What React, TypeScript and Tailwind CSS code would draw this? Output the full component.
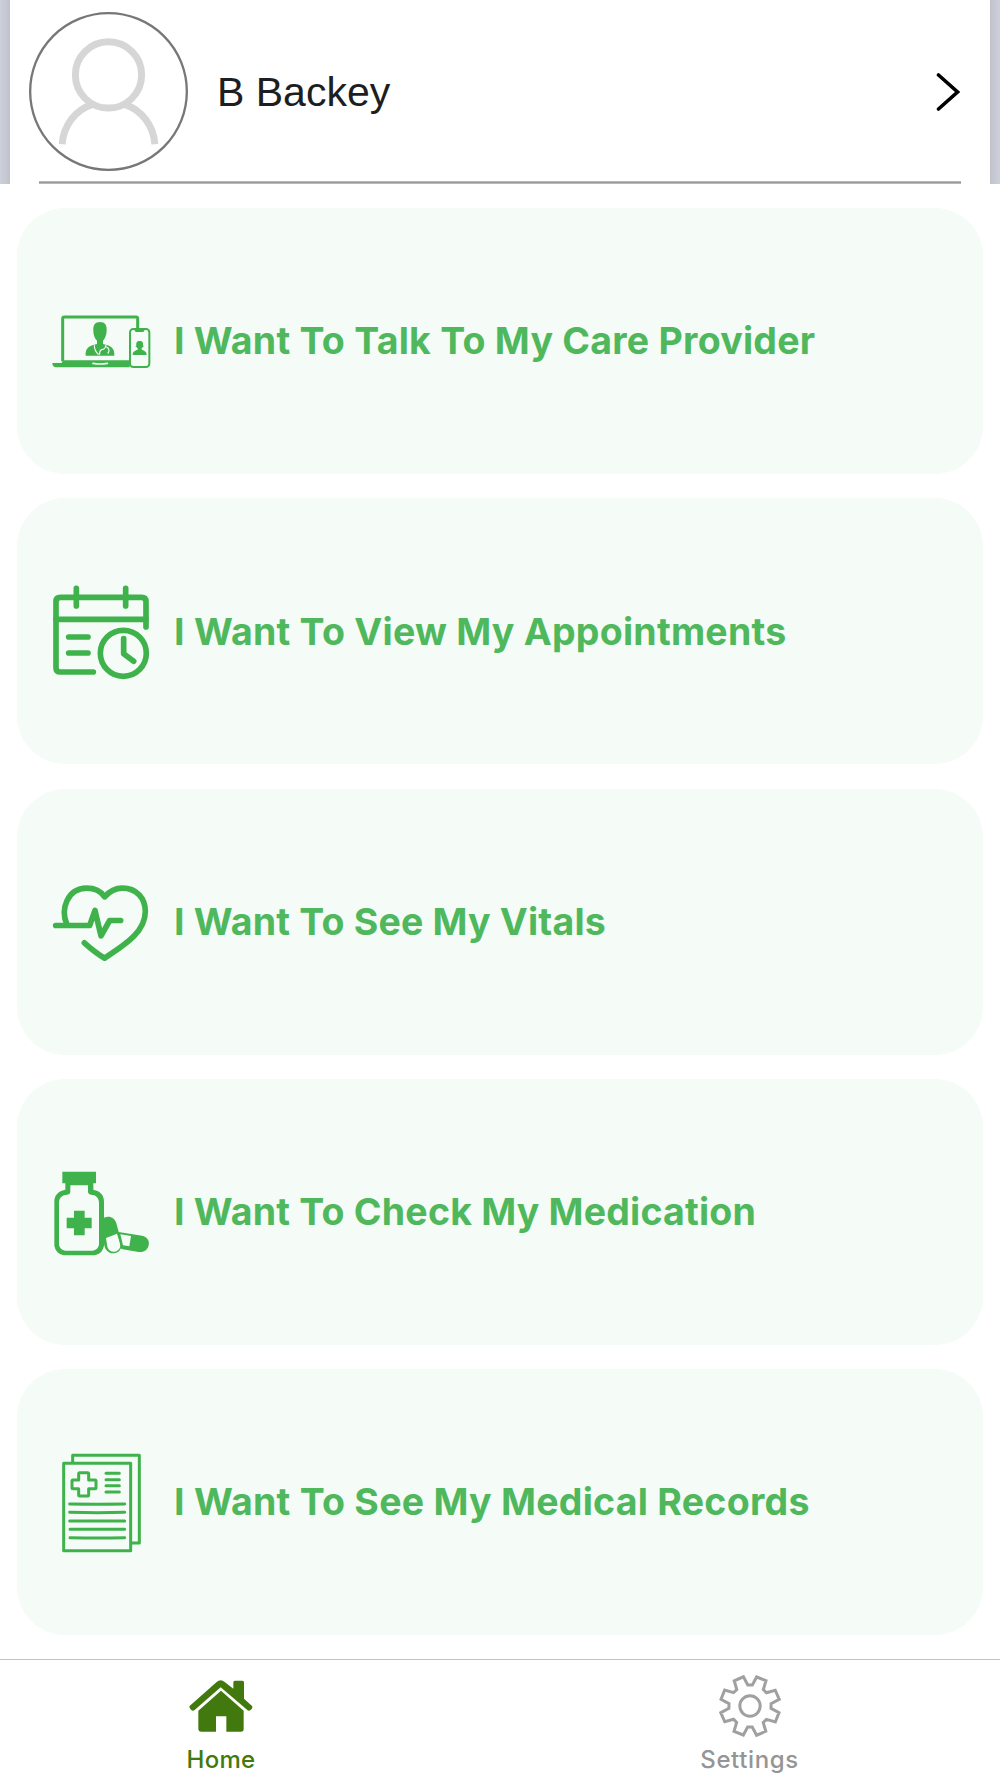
import React from 'react';

interface MenuItem {
  label: string;
  icon: React.ReactNode;
  textClass: string;
}

const GREEN = '#3fb24c';
const PALE = '#f5fbf7';

const TelehealthIcon = () => (
  <svg className="w-[130px] h-20" viewBox="0 3 390 240" fill="none">
    <path d="M68 184V56q0-5 5-5h215q5 0 5 5v28" stroke={GREEN} strokeWidth="9" />
    <path d="M37 189h28l4-8h200v21H48q-11-1-11-13z" fill={GREEN} />
    <path d="M159 190q21 4 43 0" stroke={PALE} strokeWidth="5" strokeLinecap="round" />
    <path d="M180 66c15 0 21 10 20 26-1 14-5 24-11 30v10l14 4c16 6 21 15 20 31h-86c-1-17 5-26 20-31l14-4v-10c-6-6-11-16-11-30-1-16 5-26 20-26z" fill={GREEN} />
    <path d="M163 136c0 13 3 20 13 28M198 135c-2 9-4 13-14 14-5 4-6 10-5 15M199 140c11 7 9 14 4 21" stroke={PALE} strokeWidth="3.5" />
    <circle cx="195" cy="154" r="5" fill={GREEN} />
    <rect x="270" y="87" width="58" height="114" rx="10" fill={PALE} stroke={GREEN} strokeWidth="6" />
    <path d="M284 88h29v3q0 5-5 5h-19q-5 0-5-5z" fill={GREEN} />
    <path d="M299 123c9 0 11 6 10 14l3 1-7 7v4c8 3 15 5 15 16h-42c0-11 7-13 15-16v-4l-7-7 3-1c-1-8 1-14 10-14z" fill={GREEN} />
  </svg>
);

const CalendarIcon = () => (
  <svg className="w-[130px] h-[120px]" viewBox="0 3 390 360" fill="none" stroke={GREEN} strokeWidth="17" strokeLinecap="round">
    <path d="M160 306H61q-13 0-13-13V95q0-13 13-13h244q13 0 13 13v76" />
    <path d="M48 148h270M109 55v53M257 55v53M86 201h58M86 249h58" />
    <circle cx="250" cy="250" r="69" />
    <path d="M251 206v45l30 23" strokeLinejoin="round" />
  </svg>
);

const VitalsIcon = () => (
  <svg className="w-[130px] h-[100px]" viewBox="0 4.5 390 300" fill="none" stroke={GREEN} strokeWidth="17" strokeLinecap="round" strokeLinejoin="round">
    <path d="M80 160C62 118 80 54 140 53c27 0 43 10 54 26 14-16 29-26 53-26 42 0 69 29 69 70 0 67-75 107-122 140-21-12-41-28-61-46" />
    <path d="M47 165h102l16-45 18 76 26-46h33" />
  </svg>
);

const MedicationIcon = () => (
  <svg className="w-[130px] h-[110px]" viewBox="0 5 390 330" fill="none">
    <path d="M67 49h101v35h-8v19c22 4 32 17 32 36v132q-4 24-28 29H71q-24-5-28-29V139c0-19 11-32 33-36V84h-9z" fill={GREEN} />
    <path d="M91 90h53v18q0 10 9 10c14 0 24 9 24 24v125c-1 11-9 19-20 19H77c-11 0-19-8-20-19V142c0-15 10-24 25-24q9 0 9-10z" fill={PALE} />
    <path d="M102 166h32v21h21v32h-21v21h-32v-21H80v-32h22z" fill={GREEN} />
    <path d="M192 187c18-7 32 1 37 17l15 55c4 16-4 31-18 34-15 4-27-5-32-19l-2-9z" fill={GREEN} />
    <path d="M198 248l33-13 9 27c4 13-3 23-15 27-11 2-19-4-23-15z" fill={PALE} />
    <path d="M231 229l75 12c17 4 23 16 20 29-3 14-14 22-30 20l-52-9z" fill={GREEN} />
    <path d="M241 237l32 5-5 31-19-3z" fill={PALE} />
  </svg>
);

const RecordsIcon = () => (
  <svg className="w-[130px] h-[120px]" viewBox="0 6 390 360" fill="none" stroke={GREEN} strokeWidth="9" strokeLinecap="round" strokeLinejoin="round">
    <path d="M98 67V46h200v263h-24" />
    <path d="M71 70h201v262H71z" />
    <path d="M119 98h24q3 0 3 3v19h19q3 0 3 3v20q0 3-3 3h-19v19q0 3-3 3h-24q-3 0-3-3v-19H99q-3 0-3-3v-20q0-3 3-3h17v-19q0-3 3-3z" />
    <path d="M198 100h40M198 119h40M198 137h40M198 156h40M89 192q85 1 165 0M89 217q85 2 165 0M89 243h165M90 268h164M90 293q83 2 164 0" />
  </svg>
);

const HomeIcon = () => (
  <svg className="w-[66px] h-[52px]" viewBox="86 120 198 156" fill="#42790e">
    <path d="M90 199l82-73q12-10 24 0l26 20v-19q0-5 5-5h22q5 0 5 5v49l25 23q1 7-6 12-5 3-9-1l-80-68-79 69q-5 3-10-2-5-4-5-10z" />
    <path d="M185 152l68 60v55q0 8-8 8h-44v-46h-31v46h-44q-9 0-9-9v-54z" />
  </svg>
);

// tooth corners, then the foot of the next tooth, as [x, y] from the centre
const tooth = [[7, -63], [20, -87], [48, -76], [40, -49.5]];
const gearPoints = [0, 1, 2, 3, 4, 5, 6, 7]
  .flatMap((i) => {
    const a = (i * Math.PI) / 4;
    return tooth.map(([x, y]) => [
      x * Math.cos(a) - y * Math.sin(a),
      x * Math.sin(a) + y * Math.cos(a),
    ]);
  })
  .map(([x, y]) => `${x.toFixed(1)},${y.toFixed(1)}`)
  .join(' ');

const GearIcon = () => (
  <svg className="w-16 h-16" viewBox="-96 -96 192 192" fill="none" stroke="#a0a0a0" strokeWidth="9">
    <polygon points={gearPoints} />
    <circle r="30.5" />
  </svg>
);

const items: MenuItem[] = [
  { label: 'I Want To Talk To My Care Provider', icon: <TelehealthIcon />, textClass: 'tracking-[0.23px]' },
  { label: 'I Want To View My Appointments', icon: <CalendarIcon />, textClass: 'tracking-[0.24px]' },
  { label: 'I Want To See My Vitals', icon: <VitalsIcon />, textClass: 'tracking-[0.18px]' },
  { label: 'I Want To Check My Medication', icon: <MedicationIcon />, textClass: 'tracking-[0.2px]' },
  { label: 'I Want To See My Medical Records', icon: <RecordsIcon />, textClass: 'tracking-[0.25px]' },
];

const ProfileHeader = () => (
  <header className="flex h-[184px]">
    <div className="w-2.5 bg-linear-to-r from-[#cdd0db] to-[#c0c2cb]" />
    <div className="flex flex-1 flex-col">
      <div className="flex h-[181px] items-center pl-[19px] pr-[30px] pt-[3px]">
        <svg className="mb-px size-[159px]" viewBox="0 0 480 480" fill="none">
          <circle cx="240" cy="240" r="236.5" stroke="#777777" strokeWidth="7" />
          <circle cx="240" cy="190" r="100" stroke="#d6d6d6" strokeWidth="21" />
          <path d="M100 399c4-54 38-103 92-120M380 399c-4-54-38-103-92-120" stroke="#d6d6d6" strokeWidth="21" />
        </svg>
        <h1 className="ml-[29px] flex-1 font-['Liberation_Sans',Arial,sans-serif] text-[41px] leading-none text-[#1c1e22]">
          B Backey
        </h1>
        <svg className="h-10 w-6" viewBox="0 0 24 40" fill="none">
          <path d="M2.5 3l19 17-19 17" stroke="#000" strokeWidth="3.6" strokeLinecap="round" />
        </svg>
      </div>
      <div className="mx-[29px] h-[3px] border-y border-[#b9b9b9] bg-[#989898]" />
    </div>
    <div className="w-2.5 bg-linear-to-r from-[#c0c2cb] to-[#cdd0db]" />
  </header>
);

const MenuCard = ({ label, icon, textClass }: MenuItem) => (
  <button className="flex h-[266px] w-full items-center rounded-[48px] bg-[#f5fbf7] pl-[23px] text-left">
    {icon}
    <span className={`ml-[4px] whitespace-nowrap text-[37.5px] leading-none font-bold text-[#4fb85c] ${textClass}`}>
      {label}
    </span>
  </button>
);

const App = () => (
  <div className="flex h-[1778px] w-[1000px] flex-col overflow-hidden bg-white font-[Inter,sans-serif]">
    <ProfileHeader />
    <main className="flex flex-1 flex-col gap-[24.25px] px-[17px] pt-6">
      {items.map((item) => (
        <MenuCard key={item.label} {...item} />
      ))}
    </main>
    <nav className="flex h-[119px] border-t border-[#c3c3c3]">
      <button className="flex w-[442px] flex-col items-center pt-5 text-[#42790e]">
        <HomeIcon />
        <span className="mt-4 text-2xl leading-none font-medium tracking-[0.3px]">Home</span>
      </button>
      <button className="ml-[58px] flex w-[499px] flex-col items-center pt-3.5 text-[#959595]">
        <GearIcon />
        <span className="mt-2.5 text-2xl leading-none font-medium tracking-[0.6px]">Settings</span>
      </button>
    </nav>
  </div>
);

export default App;
